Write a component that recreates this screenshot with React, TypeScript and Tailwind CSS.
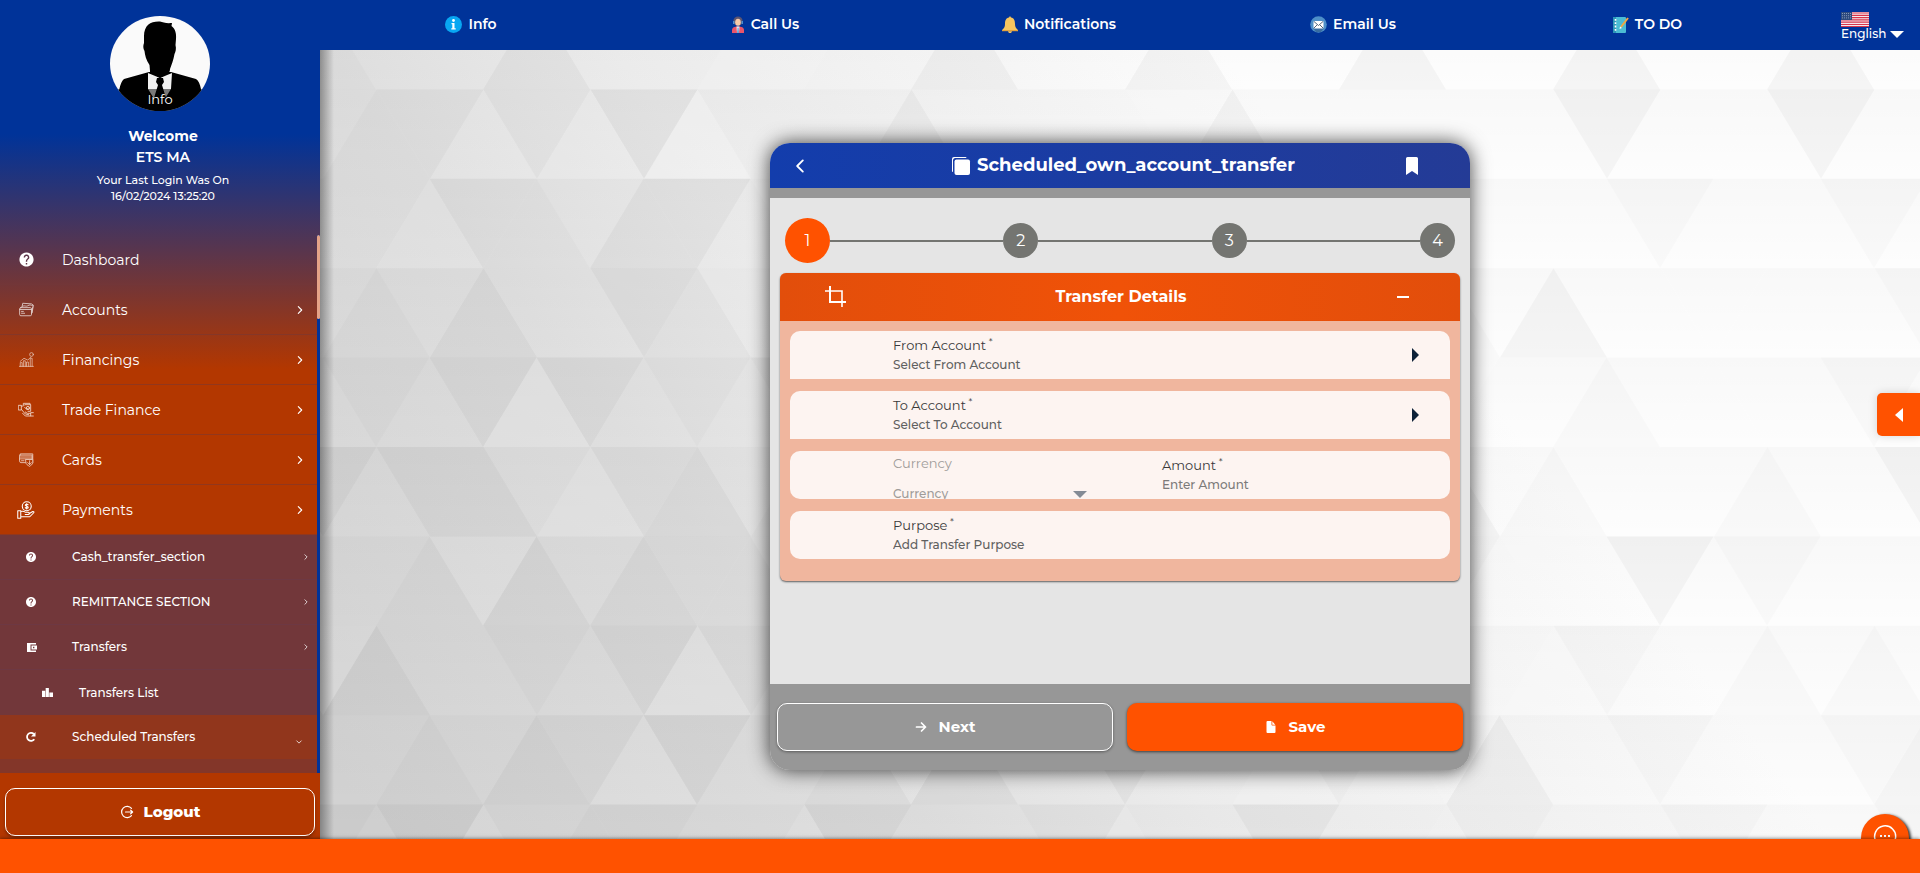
import React from "react";
import { IoChevronBack, IoChevronDown, IoChevronForward } from "react-icons/io5";
import { MdHelp } from "react-icons/md";

/* ---------- Background ---------- */

const CELL = 107;
const ROW = 89.4;

// One digit per triangle, left to right: 0 darkest, 4 unchanged, 9 lightest.
const SHADES = [
  "344424445544244524452444244424454",
  "443353526444244445245444424542444",
  "445334224554434445444445434443544",
  "443424423554444445444534244544435",
  "434252434344444445444644345443454",
  "424224532434444454444524354434524",
  "443524233444454444445345424354434",
  "352443425344544444454344534435344",
  "443423524435244244534524434453244",
  "434254334452444354424453444354434",
];

function Backdrop() {
  const shapes: React.ReactNode[] = [];
  SHADES.forEach((line, r) => {
    const top = r * ROW - 50;
    const bottom = top + ROW;
    const start = r % 2 === 0 ? -51 : -104;
    for (let i = 0; i < line.length; i++) {
      const value = Number(line[i]) - 4;
      if (value === 0) continue;
      const x = start + (i * CELL) / 2;
      const points =
        i % 2 === 0
          ? `${x},${bottom} ${x + CELL / 2},${top} ${x + CELL},${bottom}`
          : `${x},${top} ${x + CELL},${top} ${x + CELL / 2},${bottom}`;
      const opacity = value < 0 ? -value * 0.015 : value * 0.11;
      shapes.push(
        <polygon key={`${r}-${i}`} points={points} fill={value < 0 ? "#000" : "#fff"} opacity={opacity} />,
      );
    }
  });
  return (
    <svg aria-hidden="true" className="absolute inset-0 h-full w-full" viewBox="0 0 1600 789" preserveAspectRatio="xMinYMin slice">
      <defs>
        <linearGradient id="bg" x1="0" y1="700" x2="900" y2="0" gradientUnits="userSpaceOnUse">
          <stop offset="0" stopColor="#d2d2d2" />
          <stop offset="0.38" stopColor="#dfdfdf" />
          <stop offset="0.58" stopColor="#ececec" />
          <stop offset="1" stopColor="#fdfdfd" />
        </linearGradient>
        <linearGradient id="band" x1="0" y1="0" x2="0" y2="1">
          <stop offset="0" stopColor="#000" stopOpacity="0.02" />
          <stop offset="1" stopColor="#000" stopOpacity="0" />
        </linearGradient>
      </defs>
      <rect width="1600" height="800" fill="url(#bg)" />
      {SHADES.map((_, r) => (
        <rect key={r} y={r * ROW - 50} width="1600" height={ROW} fill="url(#band)" />
      ))}
      {shapes}
    </svg>
  );
}

/* ---------- Icons ---------- */

const line = { fill: "none", stroke: "currentColor", strokeLinecap: "round", strokeLinejoin: "round" } as const;

const AccountsIcon = () => (
  <svg viewBox="0 0 24 24" className="size-[15px] opacity-75" {...line} strokeWidth="1.4">
    <path d="M5 7l1-5 14 1 3 2-2 12" />
    <path d="M4 8c4-4 7 0 10-2s5-1 8 0M3 9h15a2 2 0 0 1 2 2v9a2 2 0 0 1-2 2H3a2 2 0 0 1-2-2v-9a2 2 0 0 1 2-2z" />
    <path d="M1 12h19M4 18h5M4 15h3M20 19l2-11" />
  </svg>
);

const FinancingsIcon = () => (
  <svg viewBox="0 0 24 24" className="size-[15px] opacity-70" {...line} strokeWidth="1.2">
    <path d="M0 23h23M2 23v-6h3v6M7 23v-9h3v9M12 23v-7h3v7M18 23V10h3v13M2 15l6-5 6 3 5-5" />
    <circle cx="20" cy="4" r="3" />
  </svg>
);

const TradeIcon = () => (
  <svg viewBox="0 0 24 24" className="size-4 opacity-75" {...line} strokeWidth="1.4">
    <path d="M1 5h4v7H1zM5 6h3l2-2h9v10h-4M5 11l6 7 5 1M10 8l3 3 3-2M8 4V2h10v2" />
    <circle cx="15" cy="9" r="2.5" />
    <path d="M23 16h-4v5h4M19 17h-5l-3-2M19 21h-8l-4-4" />
  </svg>
);

const CardsIcon = () => (
  <svg viewBox="0 0 24 24" className="size-[15px] opacity-75" {...line} strokeWidth="1.4">
    <path d="M2 5V3h20v14M1 5h20v12H3a2 2 0 0 1-2-2zM1 8h20M1 11h20M4 14h4" />
    <path d="M11 12h11v5c0 3-3 4-5 6-3-2-6-3-6-6z" fill="#b33700" />
    <path d="M17 14v6M14 17l3 3 3-3" />
  </svg>
);

const PaymentsIcon = () => (
  <svg viewBox="0 0 24 24" className="size-[18px]" {...line} strokeWidth="1.4">
    <circle cx="13" cy="7" r="6" />
    <path d="M15 5c-1-1-4-1-4 .5S15 7 15 8.500s-3 1.500-4 .3M13 3.500v7" />
    <path d="M1 13h4v10H1zM5 14c3-1 5 0 6 1h4c2 0 2 3 0 3h-4M16 17l5-3c2 0 2 1 1 2l-5 5H5" />
  </svg>
);

const WalletIcon = () => (
  <svg viewBox="0 0 11 11" className="size-[11px]" fill="currentColor">
    <path fillRule="evenodd" d="M1 1h9v1.500H4.500v6H10V10H1zM5.500 3.500H11v4H5.500zM7 4.800v1.400h1.400V4.800z" />
  </svg>
);

const PodiumIcon = () => (
  <svg viewBox="0 0 12 12" className="size-[11px]" fill="currentColor">
    <path d="M0 4h3.500v7H0zM4 1h3.500v10H4zM8 6h4v5H8z" />
  </svg>
);

const RefreshIcon = () => (
  <svg viewBox="0 0 12 12" className="size-3" fill="none" stroke="currentColor" strokeWidth="1.800">
    <path d="M9.300 8.200A4 4 0 1 1 8.800 3" />
    <path d="M10.500 1v4.500H6z" fill="currentColor" stroke="none" />
  </svg>
);

const LogoutIcon = () => (
  <svg viewBox="0 0 14 14" className="size-[14px]" {...line} strokeWidth="1.2">
    <path d="M11.500 3.400A5.600 5.600 0 1 0 11.500 10.600M5.500 7h7M10.700 5.200L12.600 7l-1.900 1.800" />
  </svg>
);

const CopyIcon = () => (
  <svg viewBox="0 0 20 20" className="size-5" fill="currentColor">
    <path d="M3 1h11.500a1 1 0 0 1 1 1H4.500A2.500 2.500 0 0 0 2 4.500v11.500a1 1 0 0 1-1-1V3a2 2 0 0 1 2-2z" />
    <rect x="3.500" y="3.500" width="15.500" height="15.500" rx="2" />
  </svg>
);

const BookmarkIcon = () => (
  <svg viewBox="0 0 20 20" className="size-5" fill="currentColor">
    <path d="M5.500 1h9a1.500 1.500 0 0 1 1.500 1.500V19l-6-4-6 4V2.500A1.500 1.500 0 0 1 5.500 1z" />
  </svg>
);

const ArrowIcon = () => (
  <svg viewBox="0 0 12 12" className="size-3" {...line} strokeWidth="1.700">
    <path d="M1.500 6h9M6.500 2l4 4-4 4" />
  </svg>
);

const FileIcon = () => (
  <svg viewBox="0 0 12 12" className="size-3" fill="currentColor">
    <path d="M2.500 0H6.500v3.700a.8.800 0 0 0 .8.800H10.500V11a1 1 0 0 1-1 1h-7a1 1 0 0 1-1-1V1a1 1 0 0 1 1-1zM7.300.3l3 3.400h-3z" />
  </svg>
);

const CropIcon = () => (
  <svg viewBox="0 0 22 22" className="size-[22px]" fill="none" stroke="currentColor">
    <path d="M5 0v16H21" strokeWidth="2" />
    <path d="M0 5h17v16" strokeWidth="1.600" />
  </svg>
);

const Caret = ({ className, d }: { className: string; d: string }) => (
  <svg viewBox="0 0 14 14" preserveAspectRatio="none" className={className} fill="currentColor" aria-hidden="true">
    <path d={d} />
  </svg>
);
const RIGHT = "M0 0L14 7L0 14z";
const LEFT = "M14 0L0 7L14 14z";
const DOWN = "M0 0H14L7 14z";

const InfoIcon = () => (
  <svg viewBox="0 0 17 17" className="size-[17px]">
    <circle cx="8.500" cy="8.500" r="8.500" fill="#08a7f2" />
    <circle cx="8.500" cy="4.500" r="1.400" fill="#fff" />
    <path d="M6.500 7h3v5.300h1.200v1.200H6.300v-1.200h1V8.200h-.8z" fill="#fff" />
  </svg>
);

const AgentIcon = () => (
  <svg viewBox="0 0 14 17" className="h-[17px] w-[14px]">
    <circle cx="7" cy="5" r="4.600" fill="#5d5570" />
    <path d="M2 5h1.500v3H2zM10.500 5H12v3h-1.500z" fill="#4c8fd0" />
    <ellipse cx="7" cy="6.300" rx="2.800" ry="3.500" fill="#f6c9a8" />
    <path d="M1 17v-3c0-2.500 2.500-3.500 6-3.500s6 1 6 3.500v3z" fill="#e9556b" />
    <path d="M5.500 10.500h3L8 17H6z" fill="#fff" />
    <path d="M6.600 11.500h.9l.4 5.500H6.200z" fill="#4c8fd0" />
  </svg>
);

const BellIcon = () => (
  <svg viewBox="0 0 16 17" className="h-[17px] w-4">
    <path d="M8 0l1 1.500c3 .5 4 3 4 6.500 0 3 1 4.500 3 6H0c2-1.500 3-3 3-6 0-3.500 1-6 4-6.500z" fill="#f7c65f" />
    <path d="M0 14h16v1.200H0z" fill="#e3a33e" />
    <path d="M6 15.200h4c0 2.400-4 2.400-4 0z" fill="#f7c65f" />
  </svg>
);

const MailIcon = () => (
  <svg viewBox="0 0 17 17" className="size-[17px]">
    <circle cx="8.500" cy="8.500" r="8.300" fill="#4d8fc8" />
    <path d="M3 12h11l-3 4H6z" fill="#3a6da0" />
    <rect x="3.500" y="5" width="10" height="7.500" rx="1" fill="#fff" />
    <path d="M4 5.500l4.500 4 4.500-4M4 12l3-3M13 12l-3-3" stroke="#55657a" fill="none" />
  </svg>
);

const TodoIcon = () => (
  <svg viewBox="0 0 17 17" className="size-[17px]">
    <rect x="1" y="1" width="13" height="16" rx="1" fill="#4bbcd4" />
    <path d="M1 1h3v16H1z" fill="#2c96b8" />
    <path d="M3.500 3v12" stroke="#fff" strokeWidth="1.600" strokeDasharray="1.800 1.500" />
    <path d="M16 2L9 11" stroke="#f4a640" strokeWidth="2" />
    <path d="M7.500 13l.5-2.500 2 1.500z" fill="#fff" />
  </svg>
);

const FlagIcon = () => (
  <svg viewBox="0 0 28 15" className="h-[15px] w-7" aria-hidden="true">
    <rect width="28" height="15" fill="#f5e9ec" />
    <path d="M0 1h28M0 3.300h28M0 5.600h28M0 7.900h28M0 10.200h28M0 12.500h28M0 14.600h28" stroke="#d8344c" strokeWidth="1.200" />
    <rect width="11" height="8" fill="#2d4a7d" />
    <path d="M1 1.500h10M1 3.700h10M1 5.900h10" stroke="#b9c5da" strokeWidth=".8" strokeDasharray=".8 1.200" />
  </svg>
);

const Avatar = () => (
  <svg viewBox="0 0 100 95" className="h-[95px] w-[100px]" role="img" aria-label="Profile picture">
    <rect width="100" height="95" fill="#fafafa" />
    <path
      d="M34 20C34 9 41 5 50 5.500c3 1 6 2 12 1.500l-.5 3c4 3 5 8 4.500 13l-.5 6c1 4 0 7-1 9-1 6-3 11-4.500 15L59 56 50 61 40 55l-.5-6C36 44 35 39 34.500 35c-1.500-3-1.500-5-.5-8z"
      fill="#000"
    />
    <path d="M39 56L14 63c-4 3-6 14-8 32h88c-2-18-3-29-8-32L61 56z" fill="#000" />
    <path d="M38 57l12 5 12-5-1 16-5 8H43l-5-8z" fill="#f2f2f2" />
    <path d="M40 51l8 4 12-2-1 4-9 5-10-6z" fill="#000" />
    <path d="M47 62h6l1 4-2 3 4 13H44l4-13-2-3z" fill="#000" />
  </svg>
);

/* ---------- Header ---------- */

const topLinks = [
  { label: "Info", icon: <InfoIcon /> },
  { label: "Call Us", icon: <AgentIcon /> },
  { label: "Notifications", icon: <BellIcon /> },
  { label: "Email Us", icon: <MailIcon /> },
  { label: "TO DO", icon: <TodoIcon /> },
];

function Header() {
  return (
    <header className="flex h-[50px] shrink-0 items-start bg-[#003399] pr-4 pl-1 text-white">
      <nav className="grid flex-1 grid-cols-5" aria-label="Quick links">
        {topLinks.map((item) => (
          <button key={item.label} type="button" className="flex h-12 items-center justify-center gap-1.5 text-sm font-semibold">
            {item.icon}
            {item.label}
          </button>
        ))}
      </nav>
      <button type="button" className="flex w-[110px] flex-col items-start pt-3 pl-[47px] text-xs leading-[14px] font-medium">
        <FlagIcon />
        <span className="flex items-center gap-1 whitespace-nowrap">
          English
          <Caret className="h-[7px] w-[14px]" d={DOWN} />
        </span>
      </button>
    </header>
  );
}

/* ---------- Sidebar ---------- */

const menu = [
  { label: "Dashboard", icon: <MdHelp className="size-[17px]" />, open: false },
  { label: "Accounts", icon: <AccountsIcon />, open: true },
  { label: "Financings", icon: <FinancingsIcon />, open: true },
  { label: "Trade Finance", icon: <TradeIcon />, open: true },
  { label: "Cards", icon: <CardsIcon />, open: true },
  { label: "Payments", icon: <PaymentsIcon />, open: true },
];

const subMenu = [
  { label: "Cash_transfer_section", icon: <MdHelp className="size-3" /> },
  { label: "REMITTANCE SECTION", icon: <MdHelp className="size-3" /> },
  { label: "Transfers", icon: <WalletIcon /> },
];

function Sidebar() {
  return (
    <aside className="relative z-10 flex w-[320px] shrink-0 flex-col bg-[linear-gradient(to_bottom,#003399_16%,#b33700_44%)] text-white">
      <div className="flex h-[235px] shrink-0 flex-col items-center pt-4">
        <div className="relative overflow-hidden rounded-[50%]">
          <Avatar />
          <button type="button" className="absolute inset-x-0 bottom-0 h-[22px] bg-black/50 pb-0.5 text-[13px] leading-[18px]">
            Info
          </button>
        </div>
        <div className="flex flex-col items-center pt-[14px] pl-1.5">
          <p className="text-sm leading-[22px] font-bold">Welcome</p>
          <p className="text-sm leading-5 font-semibold">ETS MA</p>
          <p className="pt-[5px] text-[11px] leading-4 font-medium">
            <span className="block text-center">Your Last Login Was On</span>
            <span className="block text-center">16/02/2024 13:25:20</span>
          </p>
        </div>
      </div>

      <div className="flex min-h-0 flex-1">
        <nav className="flex-1 overflow-hidden" aria-label="Main menu">
          {menu.map((item) => (
            <button
              key={item.label}
              type="button"
              className="flex h-[50px] w-full items-center border-b border-[#72373a]/50 pr-[11px] pl-[17px] text-left text-sm"
            >
              <span className="flex w-[18px] justify-center">{item.icon}</span>
              <span className="flex-1 pl-[27px]">{item.label}</span>
              {item.open && <IoChevronForward className="size-3" />}
            </button>
          ))}
          <div className="bg-[#72373a]">
            {subMenu.map((item) => (
              <button
                key={item.label}
                type="button"
                className="flex h-[45px] w-full items-center border-b border-[#6d3843] pr-[7px] pl-[25px] text-left text-xs font-medium"
              >
                <span className="flex w-3 justify-center">{item.icon}</span>
                <span className="flex-1 pl-[35px]">{item.label}</span>
                <IoChevronForward className="size-2" />
              </button>
            ))}
            <button type="button" className="flex h-[45px] w-full items-center pl-[42px] text-left text-xs font-medium">
              <PodiumIcon />
              <span className="pl-[26px]">Transfers List</span>
            </button>
            <button type="button" className="flex h-11 w-full items-center bg-[#91361c] pr-[14px] pl-[25px] text-left text-xs font-medium">
              <RefreshIcon />
              <span className="flex-1 pl-[35px]">Scheduled Transfers</span>
              <IoChevronDown className="mt-2.5 size-2" />
            </button>
            <div className="h-11 bg-[#833629]" />
          </div>
        </nav>
        <div className="w-[3px] bg-[#003399]">
          <div className="h-[84px] rounded-sm bg-[#e5a388]" />
        </div>
      </div>

      <div className="shrink-0 px-[5px] pt-[15px] pb-[3px]">
        <button
          type="button"
          className="flex h-12 w-full items-center justify-center gap-2.5 rounded-[10px] border border-white text-[15px] font-extrabold shadow-[0_2px_3px_rgba(0,0,0,0.3)]"
        >
          <LogoutIcon />
          Logout
        </button>
      </div>
    </aside>
  );
}

/* ---------- Transfer card ---------- */

function Steps() {
  return (
    <ol className="flex h-[75px] items-center px-[15px] pt-[10px] text-white">
      {[1, 2, 3, 4].map((n) => (
        <React.Fragment key={n}>
          {n > 1 && <li aria-hidden="true" className="h-0.5 flex-1 bg-[#747571]" />}
          <li
            className={
              n === 1
                ? "flex size-[45px] items-center justify-center rounded-full bg-[#ff5200] text-base"
                : "flex size-[35px] items-center justify-center rounded-full bg-[#747571] text-base"
            }
          >
            {n}
          </li>
        </React.Fragment>
      ))}
    </ol>
  );
}

const Star = () => <sup className="text-[10px]"> *</sup>;

function AccountField({ label, value }: { label: string; value: string }) {
  return (
    <button type="button" className="flex h-12 w-full items-center rounded-t-[10px] bg-[#fdf4f1] pr-[31px] pl-[103px] text-left">
      <span className="flex-1">
        <span className="block text-[13px] leading-[19px] text-[#3a3a3a]">
          {label}
          <Star />
        </span>
        <span className="block text-xs leading-[19px] font-medium text-[#606060]">{value}</span>
      </span>
      <Caret className="h-[14px] w-[7px] text-[#0e2239]" d={RIGHT} />
    </button>
  );
}

function TransferCard() {
  return (
    <section className="relative flex w-[700px] flex-col overflow-hidden rounded-[20px] bg-[#e5e5e5] shadow-[0_0_20px_rgba(0,0,0,0.75)]">
      <header className="flex h-[45px] items-center bg-[linear-gradient(to_right,#133dac,#243b96)] pr-12 pl-5 text-white">
        <button type="button" aria-label="Back" className="w-[54px]">
          <IoChevronBack className="size-5" />
        </button>
        <h1 className="flex flex-1 items-center justify-center gap-1.5 text-lg leading-[43px] font-bold">
          <CopyIcon />
          Scheduled_own_account_transfer
        </h1>
        <button type="button" aria-label="Bookmark">
          <BookmarkIcon />
        </button>
      </header>
      <div className="h-2.5 bg-[#979797]" />
      <div className="h-[486px]">
        <Steps />
        <div className="mx-2.5 overflow-hidden rounded-md bg-[#f0b69e] shadow-[0_1px_2px_rgba(0,0,0,0.6)]">
          <h2 className="flex h-12 items-center bg-[linear-gradient(to_right,#e24e0b,#f05208_50%,#e24e0b)] pr-[49px] pl-[45px] text-base font-bold text-white">
            <CropIcon />
            <span className="flex-1 text-center">Transfer Details</span>
            <button type="button" aria-label="Collapse">
              <svg viewBox="0 0 16 16" className="size-4" stroke="currentColor" strokeWidth="2">
                <path d="M2 8h12" />
              </svg>
            </button>
          </h2>
          <div className="flex flex-col gap-3 px-2.5 pt-2.5 pb-[22px]">
            <AccountField label="From Account" value="Select From Account" />
            <AccountField label="To Account" value="Select To Account" />
            <div className="flex h-12 overflow-hidden rounded-[10px] bg-[#fdf4f1] pl-[103px]">
              <div className="relative w-[194px] shrink-0 pt-[3px] text-[#a09c9a]">
                <label htmlFor="currency" className="block text-[13px] leading-[19px]">
                  Currency
                </label>
                <select
                  id="currency"
                  disabled
                  className="mt-[11px] block h-[19px] w-full appearance-none bg-transparent text-xs leading-[19px] font-medium text-[#a09c9a] opacity-100"
                >
                  <option>Currency</option>
                </select>
                <Caret className="pointer-events-none absolute right-0 bottom-px h-[7px] w-[14px] text-[#858b95]" d={DOWN} />
              </div>
              <div className="ml-[75px] flex-1 pt-[5px]">
                <label htmlFor="amount" className="block text-[13px] leading-[19px] text-[#3a3a3a]">
                  Amount
                  <Star />
                </label>
                <input
                  id="amount"
                  placeholder="Enter Amount"
                  className="block h-[19px] w-full bg-transparent text-xs leading-[19px] font-medium outline-none placeholder:text-[#7c7a79]"
                />
              </div>
            </div>
            <div className="h-12 rounded-[10px] bg-[#fdf4f1] pt-[5px] pl-[103px]">
              <label htmlFor="purpose" className="block text-[13px] leading-[19px] text-[#3a3a3a]">
                Purpose
                <Star />
              </label>
              <input
                id="purpose"
                placeholder="Add Transfer Purpose"
                className="block h-[19px] w-full bg-transparent text-xs leading-[19px] font-medium outline-none placeholder:text-[#606060]"
              />
            </div>
          </div>
        </div>
      </div>
      <footer className="grid grid-cols-2 gap-[14px] bg-[#979797] px-[7px] py-[19px] text-[15px] text-white">
        <button
          type="button"
          className="flex h-12 items-center justify-center gap-3 rounded-[10px] border border-white font-bold shadow-[0_1px_3px_rgba(0,0,0,0.4)]"
        >
          <ArrowIcon />
          Next
        </button>
        <button
          type="button"
          className="flex h-12 items-center justify-center gap-3 rounded-[10px] bg-[#ff5200] font-bold shadow-[0_1px_3px_rgba(0,0,0,0.6)]"
        >
          <FileIcon />
          Save
        </button>
      </footer>
    </section>
  );
}

/* ---------- Page ---------- */

export default function App() {
  return (
    <div className="flex h-screen flex-col overflow-hidden font-['Montserrat','Inter',sans-serif]">
      <div className="flex min-h-0 flex-1">
        <Sidebar />
        <div className="flex min-w-0 flex-1 flex-col">
          <Header />
          <main className="relative flex min-h-0 flex-1 items-start justify-center overflow-hidden pt-[93px]">
            <Backdrop />
            <div className="absolute inset-y-0 left-0 w-3.5 bg-[linear-gradient(to_right,rgba(0,0,0,0.35),transparent)]" />
            <TransferCard />
            <button
              type="button"
              aria-label="Open panel"
              className="absolute top-[343px] right-0 flex h-[43px] w-[43px] items-center justify-center rounded-l-[5px] bg-[#ff5200] text-white shadow-[0_0_10px_rgba(0,0,0,0.15)]"
            >
              <Caret className="h-[14px] w-2" d={LEFT} />
            </button>
            <button
              type="button"
              aria-label="Open chat"
              className="absolute right-[11px] -bottom-[23px] flex size-12 justify-center rounded-full bg-[#ff5200] pt-[10px] text-white shadow-[2px_1px_3px_rgba(0,0,0,0.8)]"
            >
              <svg viewBox="0 0 24 24" className="size-6" fill="none" stroke="currentColor" strokeWidth="1.500">
                <path d="M2 22.500l1-5A10.500 10.500 0 1 1 7 21.500z" />
                <path d="M7 12h2M11 12h2M15 12h2" strokeWidth="2" />
              </svg>
            </button>
          </main>
        </div>
      </div>
      <footer className="relative z-20 h-[34px] shrink-0 bg-[#ff5200] shadow-[0_0_4px_rgba(0,0,0,0.6)]" />
    </div>
  );
}
